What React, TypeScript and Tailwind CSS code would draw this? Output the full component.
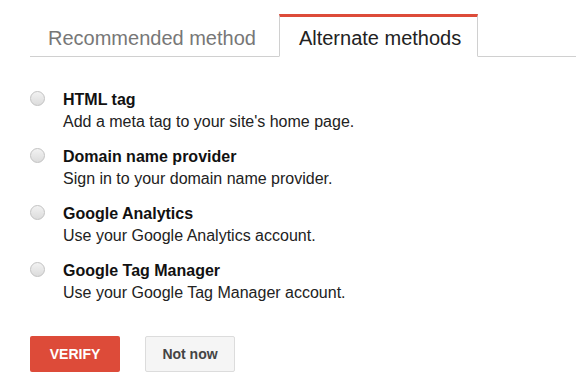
import React from 'react';

interface MethodProps {
  title: string;
  description: string;
}

const methods: MethodProps[] = [
  { title: 'HTML tag', description: "Add a meta tag to your site's home page." },
  { title: 'Domain name provider', description: 'Sign in to your domain name provider.' },
  { title: 'Google Analytics', description: 'Use your Google Analytics account.' },
  { title: 'Google Tag Manager', description: 'Use your Google Tag Manager account.' },
];

const MethodOption: React.FC<MethodProps> = ({ title, description }) => {
  return (
    <label className="flex items-start cursor-pointer">
      <span className="mt-[2px] w-[15px] h-[15px] rounded-full border border-[#c2c2c2] bg-linear-to-b from-[#f2f2f2] to-[#dcdcdc] shrink-0" />
      <span className="ml-[18px] flex flex-col text-[16px] leading-[22px]">
        <span className="font-bold text-[#111]">{title}</span>
        <span className="text-[#222]">{description}</span>
      </span>
    </label>
  );
};

export default function App() {
  return (
    <div className="w-[576px] h-[379px] bg-white overflow-hidden pt-[14px] font-['Liberation_Sans',Arial,sans-serif]">
      <div className="ml-[30px] flex items-end border-b border-[#d0d0d0]">
        <button className="pl-[18px] pr-[23px] pt-[9px] pb-[6px] text-[20px] leading-[24px] text-[#777]">
          Recommended method
        </button>
        <button className="-mb-px pl-[19px] pr-[16px] pt-[9px] pb-[6px] text-[20px] leading-[24px] text-[#222] bg-white border-t-[3px] border-t-[#dd4b39] border-x border-x-[#d0d0d0] border-b border-b-white">
          Alternate methods
        </button>
      </div>

      <div className="ml-[30px] mt-[32px] flex flex-col gap-[13px]">
        {methods.map((m) => (
          <MethodOption key={m.title} title={m.title} description={m.description} />
        ))}
      </div>

      <div className="ml-[30px] mt-[32px] flex gap-[25px]">
        <button className="w-[90px] h-[36px] rounded-[2px] bg-[#dd4b39] text-white text-[14px] font-bold">
          VERIFY
        </button>
        <button className="w-[90px] h-[36px] rounded-[2px] bg-[#f5f5f5] border border-[#dcdcdc] text-[#444] text-[14px] font-bold">
          Not now
        </button>
      </div>
    </div>
  );
}
